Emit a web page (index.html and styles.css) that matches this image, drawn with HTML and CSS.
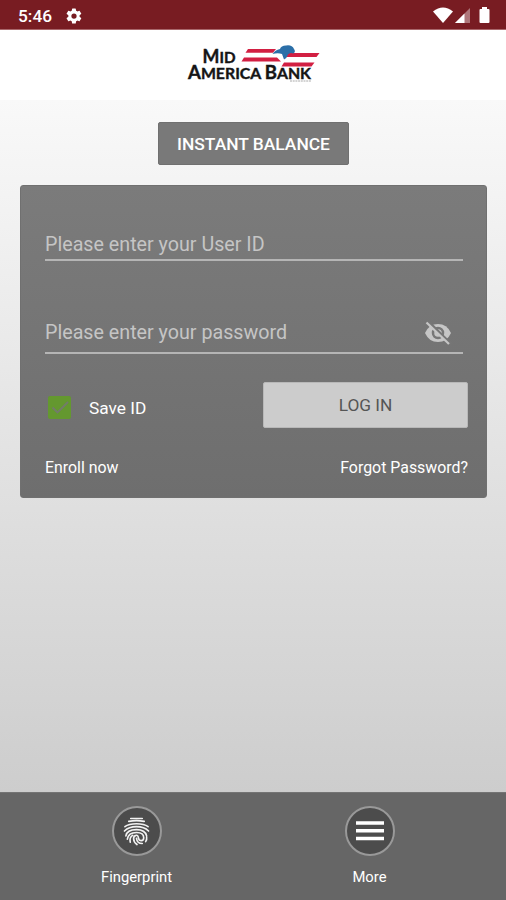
FILE: index.html
```html
<!DOCTYPE html>
<html lang="en">
<head>
<meta charset="utf-8">
<title>Mid America Bank</title>
<link rel="stylesheet" href="styles.css">
</head>
<body>
<div class="status">
  <span class="clock">5:46</span>
  <svg class="gear" viewBox="0 0 24 24"><path fill="#fff" fill-rule="evenodd" d="M19.4 13a7.8 7.8 0 0 0 0-2l2.1-1.600a.5.5 0 0 0 .1-.7l-2-3.400a.5.5 0 0 0-.6-.2l-2.500 1a7.300 7.300 0 0 0-1.700-1l-.4-2.600a.5.5 0 0 0-.5-.5h-4a.5.5 0 0 0-.5.5L9 5.100a7.300 7.300 0 0 0-1.700 1l-2.500-1a.5.5 0 0 0-.6.200l-2 3.400a.5.5 0 0 0 .1.700L4.500 11a7.800 7.800 0 0 0 0 2l-2.200 1.600a.5.5 0 0 0-.1.700l2 3.400c.1.200.4.300.6.200l2.500-1a7.300 7.300 0 0 0 1.700 1l.4 2.600c0 .3.200.5.5.5h4c.3 0 .5-.2.500-.5l.4-2.600a7.300 7.300 0 0 0 1.700-1l2.500 1c.2.100.5 0 .6-.2l2-3.400a.5.5 0 0 0-.1-.7zM12 15.500a3.500 3.500 0 1 1 0-7 3.500 3.500 0 0 1 0 7z"/></svg>
  <svg class="signals" viewBox="0 0 58 18" fill="#fff"><path d="M0 4.500Q10-3.500 20 4.500L10 16z"/><path opacity=".4" d="M37 1V16H22z"/><path d="M31.500 6.500V16H22z"/><path d="M47.500 2H49V0h5v2h1.500q1 0 1 1v12q0 1-1 1h-8q-1 0-1-1V3q0-1 1-1z"/></svg>
</div>
<header class="brand">
  <svg class="logo" viewBox="0 0 150 54">
    <g fill="#d21f42"><path d="M68 13H96L93 16.800H65.500z"/><path d="M64 21.500H97L101 25.500H61.500z"/><path d="M105 17H139.500L136.500 21H103z"/><path d="M104 26.500H134.500L131.500 30.500H101.500z"/></g>
    <path fill="#2b6fa8" d="M92.500 18Q95 14 100 13Q101 9.500 106 9.500Q112 8.500 114 13Q116 15.500 113.500 17.500Q110 16 108 18.500Q107 22 104 23.500L102 18Q98 16.500 92.500 18z"/>
    <g class="logo-text"><text x="22.500" y="27.300" textLength="33" lengthAdjust="spacingAndGlyphs"><tspan class="cap">M</tspan>ID</text><text x="8" y="43.300" textLength="123" lengthAdjust="spacingAndGlyphs"><tspan class="cap">A</tspan>MERICA <tspan class="cap">B</tspan>ANK</text></g>
    <path d="M110 45H131" stroke="#aaa" stroke-width="1" stroke-dasharray="2 .7"/>
  </svg>
</header>
<main>
  <button class="balance">INSTANT BALANCE</button>
  <form class="card">
    <div class="field user">Please enter your User ID</div>
    <div class="field password"><span>Please enter your password</span>
      <svg class="eye" viewBox="0 0 28 24"><path fill="#c6c6c6" d="M1 12Q5 3 14 3t13 9q-4 9-13 9T1 12z"/><circle cx="14" cy="12" r="5" fill="none" stroke="#777" stroke-width="2.500"/><path d="M4 0L27 23" stroke="#777" stroke-width="2.500"/><path d="M2.500 1.500L25 23" stroke="#c6c6c6" stroke-width="2.200"/></svg>
    </div>
    <div class="actions">
      <svg class="check" viewBox="0 0 23 23"><rect width="23" height="23" rx="2" fill="#64982f"/><path d="M4.500 11.500l5 5L20 6" fill="none" stroke="#737b6b" stroke-width="1.800"/></svg>
      <span class="save">Save ID</span>
      <button class="login" type="button">LOG IN</button>
    </div>
    <div class="links"><span class="enroll">Enroll now</span><span class="forgot">Forgot Password?</span></div>
  </form>
</main>
<nav>
  <div class="tab">
    <div class="disc"><svg class="finger" viewBox="0 0 28 30" fill="none" stroke="#f2f2f2" stroke-width="1.700" stroke-linecap="round"><path d="M8 1.500H20M6 4.500Q14 3 22 4.500M2 10Q6 7 14 7t12 3M1.500 14.500Q6 10 14 10t12.500 4.500M3 19.500Q4 13 14 13q9 0 10.500 6.500M4.500 23Q5.500 16 14 16q7.500 0 7.500 5.500 0 3-2.500 3-2.500 0-3-3T13.500 19q-2.500.5-2.500 3.500 0 3.500 3.500 6M7.500 26q-1-5 2.500-7M14 22q.5 5.500 6 5.500M23.500 25.500q1.500-2 1-5"/></svg></div>
    <span class="finger-label">Fingerprint</span>
  </div>
  <div class="tab">
    <div class="disc"><svg class="menu" viewBox="0 0 28 20"><path d="M0 2H28M0 9.700H28M0 17.500H28" stroke="#fff" stroke-width="3.500"/></svg></div>
    <span class="more-label">More</span>
  </div>
</nav>
</body>
</html>
```

FILE: styles.css
```css
* { box-sizing: border-box; }
body {
  margin: 0;
  width: 506px;
  height: 900px;
  overflow: hidden;
  display: flex;
  flex-direction: column;
  font-family: Roboto, sans-serif;
  color: #fff;
}
svg { display: block; flex: none; }
span, .field { white-space: nowrap; }
.status {
  height: 30px;
  flex: none;
  background: #781c22;
  border-bottom: 1px solid #a9676b;
  display: flex;
  align-items: center;
  padding: 2px 15px 0 18px;
}
.clock { font-size: 17.300px; font-weight: 500; }
.gear { width: 18px; height: 18px; margin-left: 13px; }
.signals { width: 58px; height: 18px; margin-left: auto; }
.brand { height: 70px; flex: none; background: #fff; padding: 6px 0 0 180px; }
.logo { width: 150px; height: 54px; }
.logo-text { font: 700 15.800px Lato, sans-serif; fill: #151515; stroke: #151515; stroke-width: .4px; }
.cap { font-size: 18.500px; }
main {
  height: 692px;
  flex: none;
  background: linear-gradient(#f9f9f9, #cdcdcd);
  padding: 22px 19px 0 20px;
}
button { font-family: inherit; border: 0; padding: 0; display: block; }
.balance {
  width: 191px;
  height: 43px;
  margin: 0 0 20px 138px;
  background: #797979;
  border: 1px solid #707070;
  border-radius: 2px;
  color: #fff;
  font-size: 17.400px;
  font-weight: 500;
}
.card {
  height: 313px;
  border: 1px solid #707070;
  border-radius: 3px;
  background: linear-gradient(#7b7b7b, #6e6e6e);
  padding: 0 18px 0 24px;
}
.field {
  width: 418px;
  border-bottom: 2px solid #b5b5b5;
  color: #c5c5c5;
  font-size: 19.700px;
  display: flex;
  align-items: center;
}
.user { height: 75px; padding-top: 43px; }
.password { height: 93px; padding-top: 52px; padding-right: 11px; justify-content: space-between; }
.eye { width: 28px; height: 24px; }
.actions { display: flex; height: 46px; margin-top: 28px; align-items: center; }
.check { width: 23px; height: 23px; margin: 4px 0 0 3px; }
.save { font-size: 17.300px; margin: 5px 0 0 18px; }
.login {
  width: 205px;
  height: 46px;
  margin-left: auto;
  background: #ccc;
  border: 1px solid #b8b8b8;
  border-radius: 2px;
  color: #555;
  font-size: 17.300px;
}
.links { display: flex; justify-content: space-between; margin-top: 30px; font-size: 15.900px; line-height: 20px; }
nav {
  flex: 1;
  background: #666;
  border-top: 1px solid #747474;
  display: flex;
  padding: 13px 20px 0;
}
.tab { flex: 1; display: flex; flex-direction: column; align-items: center; font-size: 14.800px; line-height: 20px; }
.disc {
  width: 50px;
  height: 50px;
  border: 2px solid #999;
  border-radius: 50%;
  background: #4c4c4c;
  display: flex;
  align-items: center;
  justify-content: center;
  margin-bottom: 11px;
}
.finger { width: 27px; height: 29px; }
.menu { width: 28px; height: 20px; }
```
